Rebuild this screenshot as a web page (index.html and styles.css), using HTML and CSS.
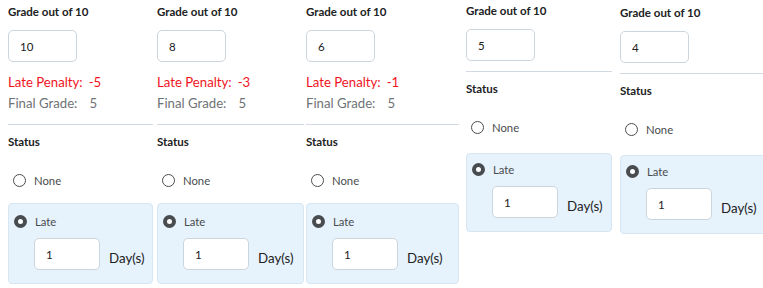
FILE: index.html
```html
<!DOCTYPE html>
<html lang="en">

<head>
    <meta charset="UTF-8">
    <meta name="viewport" content="width=device-width, initial-scale=1.0">
    <title>Late Penalty Grades</title>
    <link rel="stylesheet" href="styles.css">
</head>

<body>

    <div class="strip">
        <section class="panel panel-1">
            <div class="field-label">Grade out of 10</div>
            <input class="grade-input" type="text" value="10">
            <div class="penalty">Late Penalty:<span class="penalty-value">-5</span></div>
            <div class="final">Final Grade:<span class="final-value">5</span></div>
            <div class="divider"></div>
            <div class="field-label status-label">Status</div>
            <div class="radio-row none-row"><span class="radio"></span>None</div>
            <div class="late-box">
                <div class="radio-row"><span class="radio radio-on"></span>Late</div>
                <div class="days-row">
                    <input class="days-input" type="text" value="1">
                    <span class="days-unit">Day(s)</span>
                </div>
            </div>
        </section>

        <section class="panel panel-2">
            <div class="field-label">Grade out of 10</div>
            <input class="grade-input" type="text" value="8">
            <div class="penalty">Late Penalty:<span class="penalty-value">-3</span></div>
            <div class="final">Final Grade:<span class="final-value">5</span></div>
            <div class="divider"></div>
            <div class="field-label status-label">Status</div>
            <div class="radio-row none-row"><span class="radio"></span>None</div>
            <div class="late-box">
                <div class="radio-row"><span class="radio radio-on"></span>Late</div>
                <div class="days-row">
                    <input class="days-input" type="text" value="1">
                    <span class="days-unit">Day(s)</span>
                </div>
            </div>
        </section>

        <section class="panel panel-3">
            <div class="field-label">Grade out of 10</div>
            <input class="grade-input" type="text" value="6">
            <div class="penalty">Late Penalty:<span class="penalty-value">-1</span></div>
            <div class="final">Final Grade:<span class="final-value">5</span></div>
            <div class="divider"></div>
            <div class="field-label status-label">Status</div>
            <div class="radio-row none-row"><span class="radio"></span>None</div>
            <div class="late-box">
                <div class="radio-row"><span class="radio radio-on"></span>Late</div>
                <div class="days-row">
                    <input class="days-input" type="text" value="1">
                    <span class="days-unit">Day(s)</span>
                </div>
            </div>
        </section>

        <section class="panel panel-4 no-penalty">
            <div class="field-label">Grade out of 10</div>
            <input class="grade-input" type="text" value="5">
            <div class="divider"></div>
            <div class="field-label status-label">Status</div>
            <div class="radio-row none-row"><span class="radio"></span>None</div>
            <div class="late-box">
                <div class="radio-row"><span class="radio radio-on"></span>Late</div>
                <div class="days-row">
                    <input class="days-input" type="text" value="1">
                    <span class="days-unit">Day(s)</span>
                </div>
            </div>
        </section>

        <section class="panel panel-5 no-penalty">
            <div class="field-label">Grade out of 10</div>
            <input class="grade-input" type="text" value="4">
            <div class="divider"></div>
            <div class="field-label status-label">Status</div>
            <div class="radio-row none-row"><span class="radio"></span>None</div>
            <div class="late-box">
                <div class="radio-row"><span class="radio radio-on"></span>Late</div>
                <div class="days-row">
                    <input class="days-input" type="text" value="1">
                    <span class="days-unit">Day(s)</span>
                </div>
            </div>
        </section>
    </div>

</body>

</html>
```

FILE: styles.css
```css
html,
body {
    margin: 0;
    padding: 0;
    background-color: #fff;
    overflow: hidden;
}

body {
    font-family: Lato, "Noto Sans", sans-serif;
    color: #202122;
}

.strip {
    display: flex;
    align-items: flex-start;
    width: 763px;
    height: 288px;
    overflow: hidden;
}

.panel {
    display: flex;
    flex-direction: column;
    align-items: flex-start;
    flex-shrink: 0;
    padding-top: 4px;
}

/* each panel was cut from its own screenshot, so offsets differ a little */
.panel-1 {
    margin-left: 8px;
    width: 145px;
}

.panel-2 {
    margin-left: 4px;
    width: 147px;
}

.panel-3 {
    margin-left: 2px;
    width: 153px;
}

.panel-4 {
    margin-left: 7px;
    width: 146px;
    padding-top: 3px;
}

.panel-5 {
    margin-left: 8px;
    width: 150px;
    padding-top: 5px;
}

.field-label {
    font-size: 11.5px;
    font-weight: 700;
    line-height: 16px;
    color: #202122;
}

.grade-input,
.days-input {
    box-sizing: border-box;
    height: 32px;
    margin: 10px 0 0;
    padding: 0 11px;
    border: 1px solid #cdd5dc;
    border-radius: 5px;
    background-color: #fff;
    font-family: Lato, "Noto Sans", sans-serif;
    font-size: 11.5px;
    color: #202122;
    outline: none;
}

.grade-input {
    width: 69px;
}

.penalty,
.final {
    font-size: 13.2px;
    line-height: 20px;
}

.penalty {
    margin-top: 10px;
    color: #f0141e;
}

.penalty-value {
    margin-left: 6px;
}

.final {
    margin-top: 1px;
    color: #6e7376;
}

.final-value {
    margin-left: 12px;
}

.divider {
    align-self: stretch;
    height: 1px;
    margin-top: 11px;
    background-color: #d3d9e3;
}

.no-penalty .divider {
    margin-top: 10px;
}

.status-label {
    margin-top: 9px;
}

.radio-row {
    display: flex;
    align-items: center;
    gap: 8px;
    height: 20px;
    font-size: 11.3px;
    color: #494c4e;
}

.none-row {
    margin-top: 20px;
    padding-left: 5px;
}

.radio {
    box-sizing: border-box;
    width: 13px;
    height: 13px;
    border: 1.6px solid #494c4e;
    border-radius: 50%;
    background-color: #fff;
}

.radio-on {
    border-width: 4px;
}

.late-box {
    box-sizing: border-box;
    align-self: stretch;
    margin-top: 13px;
    padding: 7px 0 13px 5px;
    border: 1px solid #d6e6f2;
    border-radius: 4px;
    background-color: #e6f2fc;
}

.no-penalty .late-box {
    margin-top: 16px;
    padding-top: 5px;
}

.days-row {
    display: flex;
    align-items: center;
    gap: 9px;
    margin-top: 7px;
    padding-left: 20px;
}

.days-input {
    width: 66px;
    margin: 0;
}

.days-unit {
    margin-top: 7px;
    font-size: 13.3px;
    color: #202122;
}
```
